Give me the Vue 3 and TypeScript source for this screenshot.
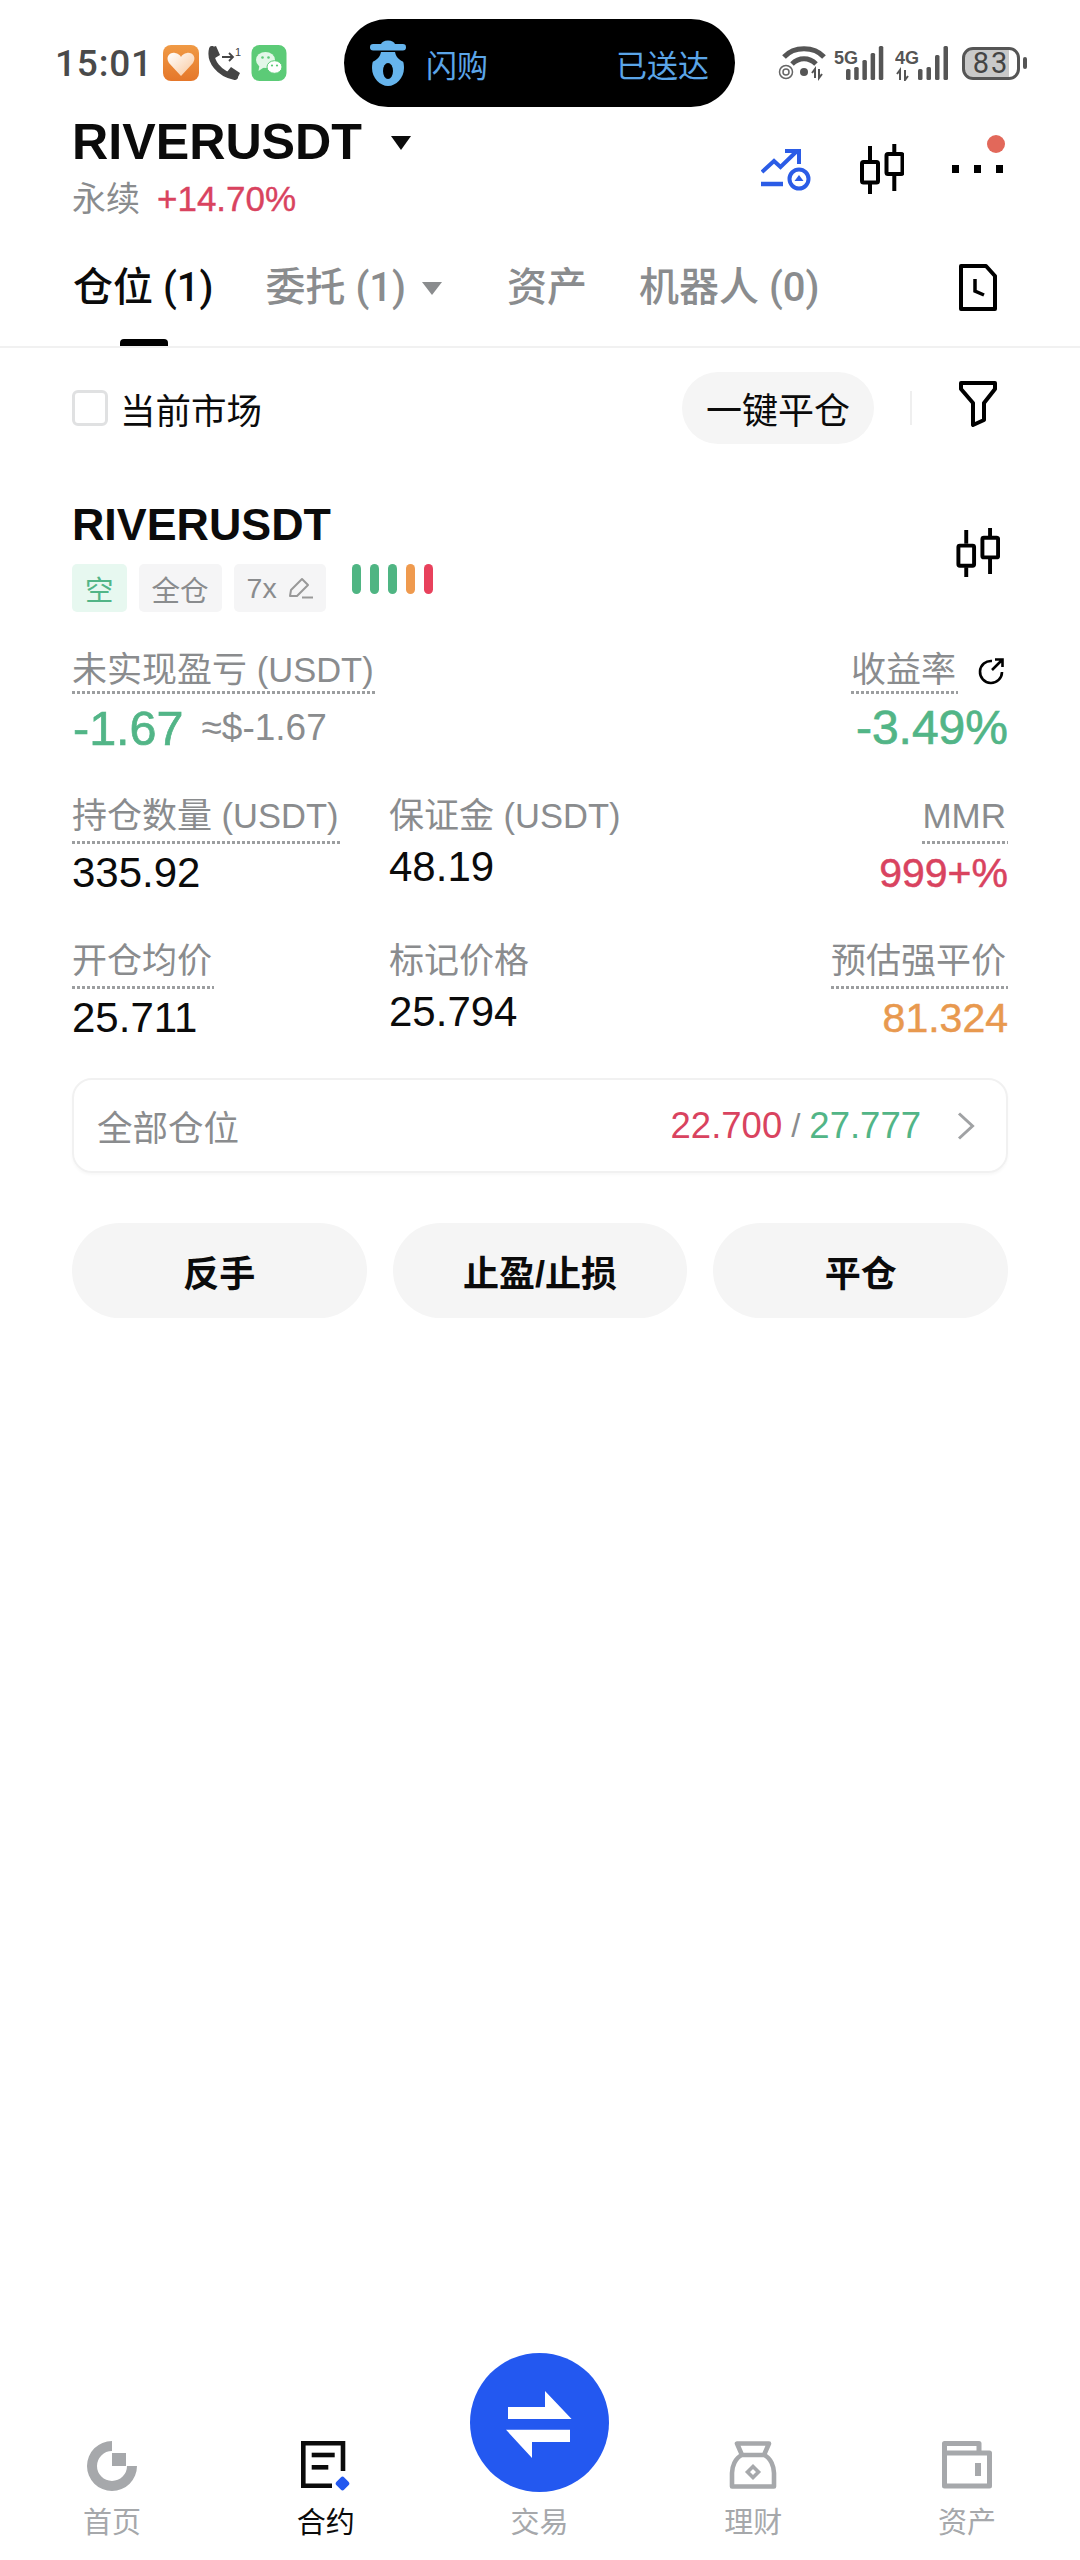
<script setup lang="ts">
interface Stat {
  label: string
  unit?: string
  value: string
  tone?: string
  dotted?: boolean
}

const qtyRow: Stat[] = [
  { label: '持仓数量', unit: '(USDT)', value: '335.92', dotted: true },
  { label: '保证金', unit: '(USDT)', value: '48.19' },
  { label: 'MMR', value: '999+%', tone: 'red', dotted: true },
]

const priceRow: Stat[] = [
  { label: '开仓均价', value: '25.711', dotted: true },
  { label: '标记价格', value: '25.794' },
  { label: '预估强平价', value: '81.324', tone: 'orange', dotted: true },
]

const rows = [qtyRow, priceRow]

const bars = ['green', 'green', 'green', 'orange', 'red']
const actions = ['反手', '止盈/止损', '平仓']
</script>

<template>
  <div class="page">
    <div class="status">
      <div class="status-left">
        <span class="time">15:01</span>
        <svg width="36" height="36" viewBox="0 0 36 36">
          <defs>
            <linearGradient id="orangeBg" x1="0" y1="0" x2="0" y2="1">
              <stop offset="0" stop-color="#f09a45" />
              <stop offset="1" stop-color="#e5772a" />
            </linearGradient>
            <linearGradient id="heartFill" x1="0" y1="0" x2="1" y2="1">
              <stop offset="0" stop-color="#fff" />
              <stop offset="1" stop-color="#f9c79b" />
            </linearGradient>
          </defs>
          <rect width="36" height="36" rx="8" fill="url(#orangeBg)" />
          <path d="M18 31 L6 18 C2 12 7 7 12 8 C15 8.500 17 10 18 12 C19 10 21 8.500 24 8 C29 7 34 12 30 18 Z" fill="url(#heartFill)" />
        </svg>
        <svg class="phone" width="34" height="36" viewBox="0 0 34 36">
          <path d="M5 4 C2 16 12 29 28 32" fill="none" stroke="#454545" stroke-width="6" stroke-linecap="round" />
          <path d="M3 3 L9 1 L13 10 L8 13 Z M20 27 L24 22 L33 28 L30 34 Z" fill="#454545" />
          <path d="M15 12 H26 M22 8 L26 12 L22 16" fill="none" stroke="#454545" stroke-width="1.800" />
          <text x="28" y="11" class="phone-one">1</text>
        </svg>
        <svg class="wechat" width="36" height="36" viewBox="0 0 35 36">
          <rect width="35" height="36" rx="8" fill="#5ccb77" />
          <ellipse cx="14" cy="15" rx="9.500" ry="8" fill="#e3f7e8" />
          <path d="M8 20 L7 26 L13 22 Z" fill="#e3f7e8" />
          <ellipse cx="23" cy="22" rx="7.500" ry="6.300" fill="#fff" stroke="#5ccb77" stroke-width="1" />
          <circle cx="11" cy="12.500" r="1.300" fill="#5ccb77" />
          <circle cx="17" cy="12.500" r="1.300" fill="#5ccb77" />
          <circle cx="20.500" cy="20.500" r="1.100" fill="#5ccb77" />
          <circle cx="25.500" cy="20.500" r="1.100" fill="#5ccb77" />
        </svg>
      </div>

      <div class="island">
        <svg width="36" height="46" viewBox="0 0 36 46">
          <ellipse cx="18" cy="4.500" rx="7" ry="4" fill="#66b4ec" />
          <rect y="4" width="36" height="6.500" rx="3.200" fill="#66b4ec" />
          <path d="M9 12 H27 C32 16 34 22 34 28 C34 38 26 46 18 46 C10 46 2 38 2 28 C2 22 4 16 9 12 Z" fill="#66b4ec" />
          <path d="M2 11 H11 C11 16 7 20 2 22 Z M34 11 H25 C25 16 29 20 34 22 Z" fill="#000" />
          <ellipse cx="18" cy="31" rx="5" ry="8" fill="#000" />
        </svg>
        <span class="island-text">闪购</span>
        <span class="island-text island-end">已送达</span>
      </div>

      <div class="status-right">
        <svg width="48" height="36" viewBox="0 0 48 36">
          <path d="M6 12 C16 1 36 1 46 12" fill="none" stroke="#555" stroke-width="5" />
          <path d="M14 19 C21 12 31 12 38 19" fill="none" stroke="#555" stroke-width="5" />
          <circle cx="26" cy="27" r="4" fill="#555" />
          <circle cx="8" cy="27" r="6.500" fill="none" stroke="#666" stroke-width="1.500" />
          <circle cx="8" cy="27" r="3" fill="none" stroke="#666" stroke-width="1.500" />
          <path d="M37 33 V24 L34 28 M41 24 V33 L44 29" fill="none" stroke="#555" stroke-width="2" />
        </svg>
        <svg class="signal" width="50" height="36" viewBox="0 0 50 36">
          <text x="0" y="19" class="net">5G</text>
          <rect x="12" y="24" width="4.500" height="11" rx="1.500" />
          <rect x="20.200" y="22" width="4.500" height="13" rx="1.500" />
          <rect x="28.400" y="15" width="4.500" height="20" rx="1.500" />
          <rect x="36.600" y="8" width="4.500" height="27" rx="1.500" />
          <rect x="44.800" y="1" width="4.500" height="34" rx="1.500" />
        </svg>
        <svg class="signal signal-4g" width="53" height="36" viewBox="0 0 53 36">
          <text x="0" y="19" class="net">4G</text>
          <path d="M5 35 V25 L2 29 M10 25 V35 L13 31" fill="none" stroke="#555" stroke-width="2" />
          <rect x="23" y="24" width="4.500" height="11" rx="1.500" />
          <rect x="31.500" y="22" width="4.500" height="13" rx="1.500" />
          <rect x="40" y="10" width="4.500" height="25" rx="1.500" />
          <rect x="48.500" y="1" width="4.500" height="34" rx="1.500" />
        </svg>
        <div class="battery">
          <div class="battery-body">83</div>
          <div class="battery-nub"></div>
        </div>
      </div>
    </div>

    <div class="head">
      <div>
        <div class="pair">
          <span class="pair-name">RIVERUSDT</span>
          <i class="caret caret-dark"></i>
        </div>
        <div class="pair-sub">
          <span class="muted">永续</span>
          <span class="red change">+14.70%</span>
        </div>
      </div>
      <div class="head-icons">
        <svg width="50" height="44" viewBox="0 0 50 44">
          <path d="M1 24 L13 13 L19.500 19 L36 3" fill="none" stroke="#2b5ce6" stroke-width="4" />
          <path d="M24 3 H38 V16" fill="none" stroke="#2b5ce6" stroke-width="4" />
          <path d="M0 36 H22" stroke="#2b5ce6" stroke-width="4.500" />
          <circle cx="38" cy="31" r="9.500" fill="none" stroke="#2b5ce6" stroke-width="4" />
          <path d="M38 27 L42.500 33 H33.500 Z" fill="#2b5ce6" />
        </svg>
        <svg class="candles" width="44" height="50" viewBox="0 0 44 50">
          <path d="M10 2 V16 M10 40 V50 M34.300 0 V9 M34.300 31 V47" stroke="#000" stroke-width="4" fill="none" />
          <rect x="2" y="18" width="16" height="20.500" rx="1.500" fill="none" stroke="#000" stroke-width="4" />
          <rect x="26.500" y="10" width="16" height="20" rx="1.500" fill="none" stroke="#000" stroke-width="4" />
        </svg>
        <div class="more">
          <span class="more-dot"></span>
          <span class="more-dot"></span>
          <span class="more-dot"></span>
          <span class="badge"></span>
        </div>
      </div>
    </div>

    <div class="tabs">
      <div class="tab active">仓位 (1)<span class="tab-line"></span></div>
      <div class="tab">委托 (1)<i class="caret caret-gray"></i></div>
      <div class="tab">资产</div>
      <div class="tab">机器人 (0)</div>
      <svg class="doc" width="38" height="47" viewBox="0 0 38 47">
        <path d="M2 2 H27 L36 12 V45 H2 Z" fill="none" stroke="#000" stroke-width="4" stroke-linejoin="round" />
        <path d="M16 15 V27 L25 31" fill="none" stroke="#000" stroke-width="3.500" />
      </svg>
    </div>

    <div class="filter">
      <span class="check"></span>
      <span class="filter-label">当前市场</span>
      <button class="close-all">一键平仓</button>
      <span class="divider"></span>
      <svg class="funnel" width="38" height="47" viewBox="0 0 38 47">
        <path d="M2 3 H36 V9 L25 23 V40 L14 45 V23 L2 9 Z" fill="none" stroke="#000" stroke-width="4" stroke-linejoin="round" />
      </svg>
    </div>

    <div class="card">
      <div class="card-head">
        <div>
          <div class="card-title">RIVERUSDT</div>
          <div class="tags">
            <span class="tag tag-short">空</span>
            <span class="tag">全仓</span>
            <span class="tag tag-lev">7x
              <svg width="24" height="22" viewBox="0 0 24 22">
                <path d="M1 19 L2 13 L13 2 L19 8 L8 19 Z" fill="none" stroke="#999" stroke-width="2" stroke-linejoin="round" />
                <path d="M13 20.500 H24" stroke="#999" stroke-width="2" />
              </svg>
            </span>
            <div class="bars">
              <span v-for="(bar, i) in bars" :key="i" class="bar" :class="bar"></span>
            </div>
          </div>
        </div>
        <svg class="card-candles" width="44" height="49" viewBox="0 0 44 50">
          <path d="M10 2 V16 M10 40 V50 M34.300 0 V9 M34.300 31 V47" stroke="#000" stroke-width="4" fill="none" />
          <rect x="2" y="18" width="16" height="20.500" rx="1.500" fill="none" stroke="#000" stroke-width="4" />
          <rect x="26.500" y="10" width="16" height="20" rx="1.500" fill="none" stroke="#000" stroke-width="4" />
        </svg>
      </div>

      <div class="pnl">
        <div class="stat">
          <div class="label dotted">未实现盈亏 <span class="unit">(USDT)</span></div>
          <div class="pnl-value">
            <span class="big pnl-big green-text">-1.67</span>
            <span class="approx">≈$-1.67</span>
          </div>
        </div>
        <div class="stat stat-right">
          <div class="roe-label">
            <span class="label dotted">收益率</span>
            <svg width="28" height="28" viewBox="0 0 28 28">
              <path d="M15 4 A11 11 0 1 0 25 15" fill="none" stroke="#000" stroke-width="2.600" />
              <path d="M15 13 L25 3 M18 2.500 H25.500 V10" fill="none" stroke="#000" stroke-width="2.600" />
            </svg>
          </div>
          <div class="big green-text">-3.49%</div>
        </div>
      </div>

      <div v-for="(row, r) in rows" :key="r" class="stat-row">
        <div v-for="(stat, s) in row" :key="stat.label" class="stat" :class="{ 'stat-right': s === 2 }">
          <div class="label" :class="stat.dotted ? 'dotted' : 'plain'">
            {{ stat.label }}<span v-if="stat.unit" class="unit">{{ ' ' + stat.unit }}</span>
          </div>
          <div class="value" :class="stat.tone">{{ stat.value }}</div>
        </div>
      </div>

      <div class="all">
        <span class="muted">全部仓位</span>
        <div class="all-right">
          <span class="red">22.700</span>
          <span class="slash">/</span>
          <span class="green-text">27.777</span>
          <svg width="18" height="28" viewBox="0 0 18 28">
            <path d="M2 1.500 L15.500 14 L2 26.500" fill="none" stroke="#a0a2a4" stroke-width="3" />
          </svg>
        </div>
      </div>

      <div class="actions">
        <button v-for="action in actions" :key="action" class="action">{{ action }}</button>
      </div>
    </div>

    <nav class="nav">
      <div class="nav-item">
        <svg width="50" height="50" viewBox="0 0 50 50">
          <path d="M25 0 A25 25 0 1 0 50 25 H40 A15 15 0 1 1 25 10 Z" fill="#a6a8ab" />
          <rect x="25" y="12" width="14" height="13" fill="#a6a8ab" />
        </svg>
        <span>首页</span>
      </div>
      <div class="nav-item nav-active">
        <svg width="50" height="50" viewBox="0 0 50 50">
          <path d="M42 30 V2.300 H2.300 V44.700 H31" fill="none" stroke="#0b0b0b" stroke-width="4.600" />
          <rect x="10.700" y="11.700" width="23" height="4.600" fill="#0b0b0b" />
          <rect x="10.700" y="24" width="16.600" height="4.600" fill="#0b0b0b" />
          <rect x="36" y="37" width="11" height="11" rx="2.500" fill="#2358f0" transform="rotate(45 41.500 42.500)" />
        </svg>
        <span>合约</span>
      </div>
      <div class="nav-item">
        <div class="trade">
          <svg width="80" height="80" viewBox="-40 -40 80 80">
            <path d="M-31 -16 H6 V-32 L32.600 -4 H-31 Z M-33 6.700 H31 V19 H-7 V35 Z" fill="#fff" />
          </svg>
        </div>
        <span>交易</span>
      </div>
      <div class="nav-item">
        <svg width="48" height="50" viewBox="0 0 48 50">
          <path d="M8 2.500 H40 L35 14 C42 17 45 26 45 32 V45.500 H3 V32 C3 26 6 17 13 14 Z M13 14 H35" fill="none" stroke="#a6a8ab" stroke-width="4.600" stroke-linejoin="round" />
          <path d="M24 25.500 L29.500 31 L24 36.500 L18.500 31 Z" fill="none" stroke="#a6a8ab" stroke-width="3.600" />
        </svg>
        <span>理财</span>
      </div>
      <div class="nav-item">
        <svg width="50" height="50" viewBox="0 0 50 50">
          <path d="M2.500 2.500 H37 V12 H47.500 V45 H2.500 Z M2.500 12 H37" fill="none" stroke="#a6a8ab" stroke-width="5" stroke-linejoin="round" />
          <rect x="33" y="22" width="6" height="13" fill="#a6a8ab" />
        </svg>
        <span>资产</span>
      </div>
    </nav>
  </div>
</template>

<style>
body {
  background: #fff;
}
</style>

<style scoped>
.page {
  width: 1080px;
  height: 2560px;
  display: flex;
  flex-direction: column;
  background: #fff;
  color: #0b0b0b;
  font-family: "Liberation Sans", "Noto Sans CJK SC", sans-serif;
}

.status {
  margin-top: 19px;
  height: 88px;
  display: flex;
  align-items: center;
}
.status-left {
  width: 344px;
  padding-left: 55px;
  box-sizing: border-box;
  display: flex;
  align-items: center;
}
.time {
  width: 108px;
  font-family: Roboto, sans-serif;
  font-size: 37px;
  font-weight: 500;
  letter-spacing: 0.800px;
  color: #4a4a4a;
}
.phone {
  margin-left: 8px;
}
.phone-one {
  font-size: 11px;
  fill: #454545;
}
.wechat {
  margin-left: 10px;
}
.island {
  width: 391px;
  height: 88px;
  box-sizing: border-box;
  padding: 0 26px;
  border-radius: 44px;
  background: #000;
  display: flex;
  align-items: center;
}
.island-text {
  margin-left: 20px;
  font-size: 31px;
  color: #5ba5e8;
}
.island-end {
  margin-left: auto;
}
.status-right {
  margin-left: 43px;
  display: flex;
  align-items: center;
  gap: 8px;
}
.signal rect {
  fill: #555;
}
.signal-4g {
  margin-left: 3px;
}
.net {
  font-family: "Liberation Sans Narrow", "Liberation Sans", sans-serif;
  font-size: 18px;
  font-weight: 700;
  fill: #555;
}
.battery {
  display: flex;
  align-items: center;
  margin-left: 6px;
}
.battery-body {
  width: 58px;
  height: 33px;
  box-sizing: border-box;
  border: 3px solid #555;
  border-radius: 11px;
  background: linear-gradient(to right, #c9c9c9 85%, #fff 85%);
  font-family: Roboto, sans-serif;
  font-size: 29px;
  line-height: 27px;
  letter-spacing: 2px;
  text-align: center;
  color: #444;
}
.battery-nub {
  width: 4px;
  height: 12px;
  margin-left: 3px;
  border-radius: 2px;
  background: #555;
}

.head {
  height: 111px;
  padding: 10px 76px 0 72px;
  box-sizing: border-box;
  display: flex;
  justify-content: space-between;
}
.pair {
  display: flex;
  align-items: center;
  height: 50px;
}
.pair-name {
  font-size: 50.200px;
  font-weight: 700;
}
.caret {
  display: inline-block;
  width: 0;
  height: 0;
  border-left: 10px solid transparent;
  border-right: 10px solid transparent;
}
.caret-dark {
  margin-left: 29px;
  margin-top: 2px;
  border-top: 14px solid #0b0b0b;
}
.caret-gray {
  border-top: 13px solid #8a8c8e;
}
.pair-sub {
  margin-top: 13px;
  display: flex;
  align-items: center;
  gap: 17px;
  font-size: 34px;
  line-height: 38px;
}
.change {
  font-size: 35px;
  -webkit-text-stroke: 0.400px #d9435f;
}
.muted {
  color: #8a8c8e;
}
.red {
  color: #d9435f;
}
.orange {
  color: #e8994f;
}
.green-text {
  color: #52b587;
}
.head-icons {
  display: flex;
  align-items: flex-start;
  padding-top: 31px;
}
.candles {
  margin-left: 49px;
  margin-top: -4px;
}
.more {
  position: relative;
  margin-left: 48px;
  margin-top: 17px;
  width: 52px;
  display: flex;
  gap: 15px;
}
.more-dot {
  width: 7px;
  height: 8px;
  background: #000;
}
.badge {
  position: absolute;
  left: 35px;
  top: -30px;
  width: 18px;
  height: 18px;
  border-radius: 50%;
  background: #e2685a;
}

.tabs {
  height: 130px;
  box-sizing: border-box;
  padding: 47px 0 0 73px;
  border-bottom: 2px solid #f1f1f1;
  display: flex;
  align-items: flex-start;
  gap: 52px;
}
.tab {
  position: relative;
  display: flex;
  align-items: center;
  white-space: pre;
  font-family: Roboto, "Noto Sans CJK SC", sans-serif;
  font-size: 40px;
  line-height: 46px;
  font-weight: 500;
  color: #8a8c8e;
}
.tab.active {
  color: #0b0b0b;
}
.tab-line {
  position: absolute;
  left: 47px;
  top: 74px;
  width: 48px;
  height: 7px;
  border-radius: 4px 4px 0 0;
  background: #000;
}
.tab .caret-gray {
  margin-left: 16px;
  margin-right: 13px;
}
.doc {
  margin-left: auto;
  margin-right: 83px;
  margin-top: -1px;
}

.filter {
  margin-top: 24px;
  height: 72px;
  padding: 0 83px 0 72px;
  display: flex;
  align-items: center;
}
.check {
  width: 36px;
  height: 36px;
  box-sizing: border-box;
  border: 3px solid #e0e1e2;
  border-radius: 6px;
}
.filter-label {
  margin-left: 12px;
  font-size: 35.500px;
}
.close-all {
  margin-left: auto;
  width: 192px;
  height: 72px;
  padding: 0;
  border: none;
  border-radius: 36px;
  background: #f5f5f5;
  font-family: inherit;
  font-size: 36px;
  color: #0b0b0b;
}
.divider {
  margin-left: 36px;
  width: 2px;
  height: 34px;
  background: #efefef;
}
.funnel {
  margin-left: 47px;
  margin-top: -9px;
}

.card {
  margin-top: 55px;
  padding: 0 72px;
}
.card-head {
  display: flex;
  justify-content: space-between;
  align-items: center;
}
.card-title {
  font-size: 44.800px;
  font-weight: 700;
  line-height: 50px;
}
.card-candles {
  margin: 0 8px 6px 0;
}
.tags {
  margin-top: 15px;
  display: flex;
  gap: 12px;
}
.tag {
  height: 48px;
  padding: 0 13px;
  border-radius: 5px;
  background: #f5f5f6;
  display: flex;
  align-items: center;
  font-size: 28.500px;
  color: #8a8c8e;
}
.tag-lev {
  gap: 12px;
}
.tag-short {
  background: #e7f8f0;
  color: #52b587;
}
.bars {
  margin-left: 14px;
  display: flex;
  gap: 9px;
}
.bar {
  width: 9px;
  height: 30px;
  border-radius: 4.500px;
}
.bar.green {
  background: #4fb583;
}
.bar.orange {
  background: #ef9a4e;
}
.bar.red {
  background: #e8415c;
}

.label {
  font-size: 35px;
  line-height: 44px;
  color: #8a8c8e;
  white-space: pre;
}
.unit {
  font-size: 34.500px;
}
.dotted {
  padding: 0 2px 6px 0;
  background: linear-gradient(to right, #9c9ea0 60%, transparent 0) left bottom / 5px 3px repeat-x;
}
.plain {
  padding-bottom: 2px;
}
.stat {
  display: flex;
  flex-direction: column;
  align-items: flex-start;
}
.stat-right {
  align-items: flex-end;
}
.pnl {
  margin-top: 36px;
  display: flex;
  justify-content: space-between;
}
.pnl .dotted {
  padding-bottom: 2px;
}
.pnl-value {
  display: flex;
  align-items: center;
  gap: 18px;
  padding-left: 1px;
}
.big {
  font-size: 48px;
  line-height: 68px;
  -webkit-text-stroke: 0.700px currentColor;
}
.pnl-big {
  font-size: 48.500px;
}
.approx {
  font-size: 37px;
  color: #8a8c8e;
}
.roe-label {
  display: flex;
  align-items: center;
  gap: 19px;
  margin-right: 3px;
}
.stat-row {
  margin-top: 32px;
  display: grid;
  grid-template-columns: 317px 1fr auto;
}
.stat-row + .stat-row {
  margin-top: 39px;
}
.stat-row .dotted {
  margin-bottom: 2px;
}
.value {
  font-size: 42px;
  line-height: 54px;
}
.value.red,
.value.orange {
  font-size: 41px;
  -webkit-text-stroke: 0.500px currentColor;
}

.all {
  margin-top: 33px;
  height: 95px;
  box-sizing: border-box;
  padding: 0 31px 0 23px;
  border: 2px solid #f1f1f1;
  border-radius: 20px;
  box-shadow: 0 2px 3px rgba(0, 0, 0, 0.03);
  display: flex;
  align-items: center;
  justify-content: space-between;
  font-size: 35.500px;
}
.all-right {
  display: flex;
  align-items: center;
  font-size: 36.500px;
}
.slash {
  margin: 0 9px;
  font-size: 33px;
  color: #8a8c8e;
}
.all-right svg {
  margin-left: 36px;
}

.actions {
  margin-top: 50px;
  display: grid;
  grid-template-columns: repeat(3, 1fr);
  gap: 26px;
}
.action {
  height: 95px;
  border: none;
  border-radius: 48px;
  background: #f5f5f5;
  font-family: inherit;
  font-size: 36px;
  font-weight: 700;
  color: #0b0b0b;
}

.nav {
  margin-top: auto;
  padding: 0 6px 20px 5px;
  display: grid;
  grid-template-columns: repeat(5, 1fr);
  align-items: end;
}
.nav-item {
  display: flex;
  flex-direction: column;
  align-items: center;
  gap: 15px;
  font-size: 29px;
  line-height: 34px;
  color: #a6a8ab;
}
.nav-active {
  color: #0b0b0b;
}
.trade {
  width: 139px;
  height: 139px;
  margin-bottom: -1px;
  border-radius: 50%;
  background: #2358f0;
  display: flex;
  align-items: center;
  justify-content: center;
}
</style>
